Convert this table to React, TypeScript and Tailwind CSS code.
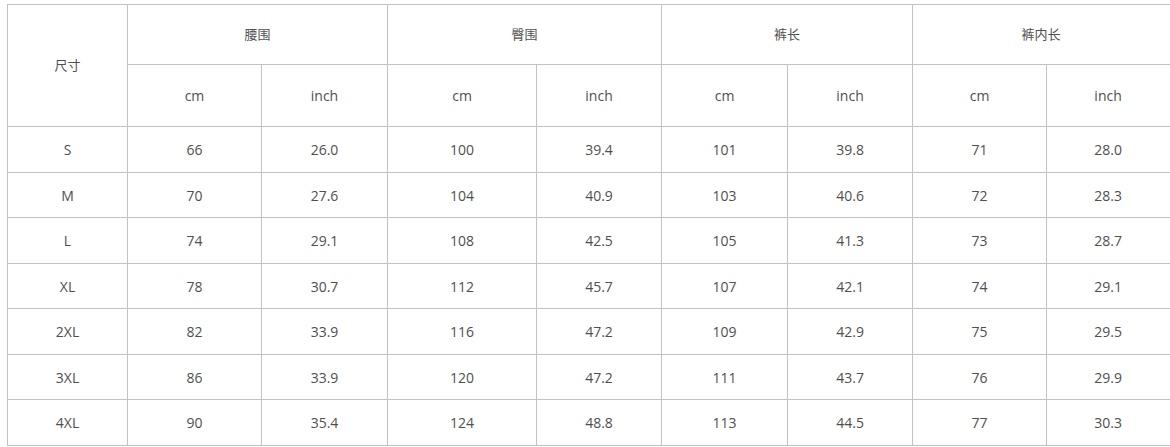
import React from "react";

const rows = [
  ["S", "66", "26.0", "100", "39.4", "101", "39.8", "71", "28.0"],
  ["M", "70", "27.6", "104", "40.9", "103", "40.6", "72", "28.3"],
  ["L", "74", "29.1", "108", "42.5", "105", "41.3", "73", "28.7"],
  ["XL", "78", "30.7", "112", "45.7", "107", "42.1", "74", "29.1"],
  ["2XL", "82", "33.9", "116", "47.2", "109", "42.9", "75", "29.5"],
  ["3XL", "86", "33.9", "120", "47.2", "111", "43.7", "76", "29.9"],
  ["4XL", "90", "35.4", "124", "48.8", "113", "44.5", "77", "30.3"],
];
const heights = ["h-[46px]", "h-[45px]", "h-[46px]", "h-[45px]", "h-[46px]", "h-[45px]", "h-[46px]"];
const groups = ["腰围", "臀围", "裤长", "裤内长"];

const cell = "border-[1.5px] border-[#c2c2c2] text-center align-middle p-0";

export default function App() {
  return (
    <div className="w-[1170px] h-[447px] overflow-hidden bg-white pt-[4px] pl-[7px]">
      <table
        className="table-fixed border-collapse w-[1172px] text-[14px] text-[#4f4f4f]"
        style={{ fontFamily: '"Open Sans", "Noto Sans CJK SC", sans-serif' }}
      >
        <colgroup>
          <col className="w-[120px]" />
          <col className="w-[134px]" />
          <col className="w-[126px]" />
          <col className="w-[149px]" />
          <col className="w-[125px]" />
          <col className="w-[126px]" />
          <col className="w-[125px]" />
          <col className="w-[134px]" />
          <col className="w-[133px]" />
        </colgroup>
        <thead>
          <tr className="h-[60px]">
            <th rowSpan={2} className={`${cell} font-normal text-[13px]`}>尺寸</th>
            {groups.map((g, i) => (
              <th
                key={g}
                colSpan={2}
                className={`${cell} font-normal text-[13px] ${i === 3 ? "pr-[10px]" : ""}`}
              >
                {g}
              </th>
            ))}
          </tr>
          <tr className="h-[62px]">
            {groups.map((g, i) => (
              <React.Fragment key={g}>
                <th className={`${cell} font-normal`}>cm</th>
                <th className={`${cell} font-normal ${i === 3 ? "pr-[10px]" : ""}`}>inch</th>
              </React.Fragment>
            ))}
          </tr>
        </thead>
        <tbody>
          {rows.map((r, i) => (
            <tr key={r[0]} className={heights[i]}>
              {r.map((v, j) => (
                <td key={j} className={`${cell} ${j === 8 ? "pr-[10px]" : ""}`}>
                  {v}
                </td>
              ))}
            </tr>
          ))}
        </tbody>
      </table>
    </div>
  );
}
